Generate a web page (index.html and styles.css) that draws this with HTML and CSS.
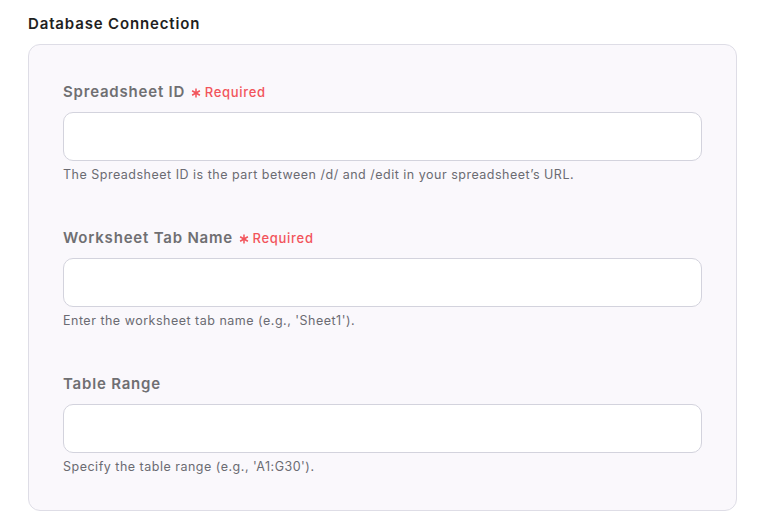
FILE: index.html
```html
<!DOCTYPE html>
<html lang="en">
<head>
  <meta charset="UTF-8" />
  <meta name="viewport" content="width=device-width, initial-scale=1.0"/>
  <title>Database Connection</title>
  <link rel="stylesheet" href="styles.css">
</head>
<body>
  <h2 class="section-title">Database Connection</h2>

  <div class="panel">
    <div class="field">
      <label for="sheet-id">Spreadsheet ID
        <span class="required">
          <svg class="star" viewBox="0 0 10 10"><path d="M5 0.5V9.5M1.1 2.75L8.9 7.25M1.1 7.25L8.9 2.75"/></svg>Required
        </span>
      </label>
      <input type="text" id="sheet-id"/>
      <p class="hint">The Spreadsheet ID is the part between /d/ and /edit in your spreadsheet’s URL.</p>
    </div>

    <div class="field">
      <label for="tab-name">Worksheet Tab Name
        <span class="required">
          <svg class="star" viewBox="0 0 10 10"><path d="M5 0.5V9.5M1.1 2.75L8.9 7.25M1.1 7.25L8.9 2.75"/></svg>Required
        </span>
      </label>
      <input type="text" id="tab-name"/>
      <p class="hint">Enter the worksheet tab name (e.g., 'Sheet1').</p>
    </div>

    <div class="field">
      <label for="range">Table Range</label>
      <input type="text" id="range"/>
      <p class="hint">Specify the table range (e.g., 'A1:G30').</p>
    </div>
  </div>
</body>
</html>
```

FILE: styles.css
```css
body {
  font-family: Inter, "Noto Sans", sans-serif;
  background: #ffffff;
  margin: 0;
  padding: 14px 28px;
  color: #1f1f22;
}
.section-title {
  font-size: 15px;
  font-weight: 600;
  line-height: 20px;
  letter-spacing: 0.85px;
  margin: 0 0 10px;
  color: #1f1f22;
}
.panel {
  width: 709px;
  box-sizing: border-box;
  background: #faf8fc;
  border: 1px solid #dedde6;
  border-radius: 12px;
  padding: 37px 34px 34px;
}
.field + .field {
  margin-top: 44px;
}
label {
  display: block;
  font-size: 15px;
  font-weight: 600;
  line-height: 20px;
  letter-spacing: 0.8px;
  color: #6f6f72;
}
.required {
  font-size: 13px;
  font-weight: 500;
  letter-spacing: 0.7px;
  color: #f2545b;
}
.star {
  width: 10px;
  height: 10px;
  margin: 0 4px 0 1px;
  vertical-align: -1px;
  fill: none;
  stroke: #f2545b;
  stroke-width: 1.5;
}
input[type="text"] {
  display: block;
  width: 100%;
  box-sizing: border-box;
  height: 49px;
  margin-top: 10px;
  border: 1px solid #d3d3dd;
  border-radius: 10px;
  background: #ffffff;
  font-family: inherit;
  font-size: 14px;
  padding: 0 14px;
}
.hint {
  margin: 5px 0 0;
  font-size: 12.5px;
  line-height: 18px;
  letter-spacing: 0.5px;
  color: #6b6b72;
}
```
